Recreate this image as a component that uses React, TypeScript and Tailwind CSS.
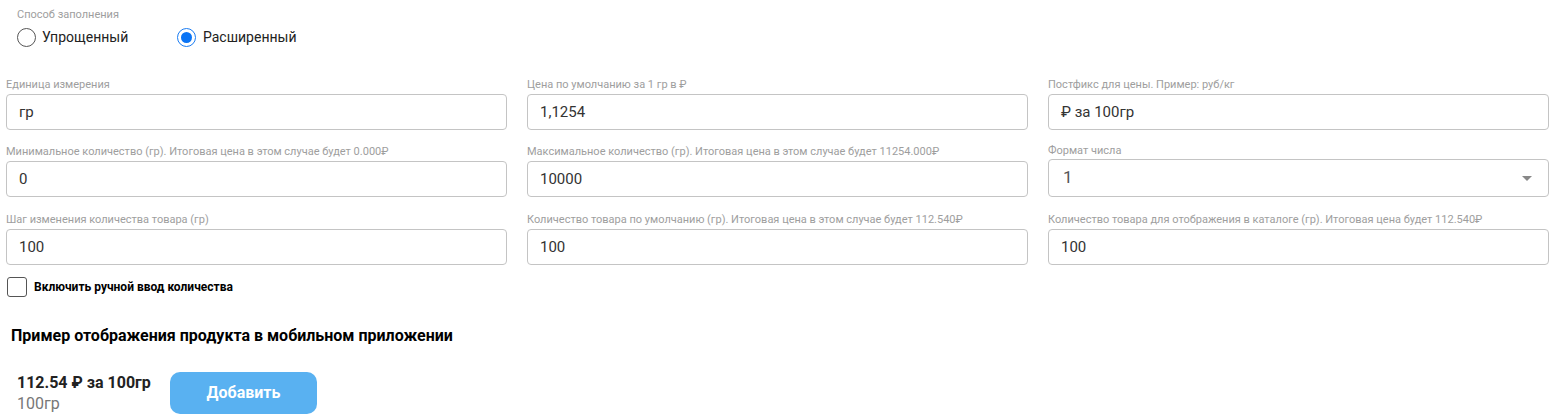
import React from "react";

const font = { fontFamily: "Roboto, 'Noto Sans', sans-serif" };

function Field({ label, value }: { label: string; value: string }) {
  return (
    <div className="flex flex-col">
      <div className="text-[11px] leading-[13px] text-[#9e9e9e] h-[13px] mb-[3px] whitespace-nowrap">{label}</div>
      <div className="h-[36px] border border-[#c4c4c4] rounded-[4px] flex items-center pl-[12px] text-[15px] text-[#333]">
        {value}
      </div>
    </div>
  );
}

export default function App() {
  return (
    <div style={font} className="w-[1563px] h-[419px] bg-white text-black overflow-hidden">
      <div className="pl-[17px] pt-[8px]">
        <div className="text-[11px] leading-[13px] text-[#9e9e9e]">Способ заполнения</div>
        <div className="flex items-center mt-[6px] h-[20px]">
          <div className="flex items-center w-[160px]">
            <div className="w-[19px] h-[19px] rounded-full border-[1.5px] border-[#555]" />
            <span className="ml-[6px] text-[14px] text-[#222]">Упрощенный</span>
          </div>
          <div className="flex items-center">
            <div className="w-[19px] h-[19px] rounded-full border-[1.5px] border-[#1a7cf2] flex items-center justify-center">
              <div className="w-[11px] h-[11px] rounded-full bg-[#0a74f5]" />
            </div>
            <span className="ml-[7px] text-[14px] text-[#222]">Расширенный</span>
          </div>
        </div>
      </div>

      <div className="pl-[6px] pr-[14px] mt-[31px] grid grid-cols-3 gap-x-[20px]">
        <div className="flex flex-col">
          <Field label="Единица измерения" value="гр" />
          <div className="mt-[15px]">
            <Field label="Минимальное количество (гр). Итоговая цена в этом случае будет 0.000₽" value="0" />
          </div>
          <div className="mt-[16px]">
            <Field label="Шаг изменения количества товара (гр)" value="100" />
          </div>
        </div>
        <div className="flex flex-col">
          <Field label="Цена по умолчанию за 1 гр в ₽" value="1,1254" />
          <div className="mt-[15px]">
            <Field label="Максимальное количество (гр). Итоговая цена в этом случае будет 11254.000₽" value="10000" />
          </div>
          <div className="mt-[16px]">
            <Field label="Количество товара по умолчанию (гр). Итоговая цена в этом случае будет 112.540₽" value="100" />
          </div>
        </div>
        <div className="flex flex-col">
          <Field label="Постфикс для цены. Пример: руб/кг" value="₽ за 100гр" />
          <div className="mt-[14px] flex flex-col">
            <div className="text-[11px] leading-[13px] text-[#9e9e9e] h-[13px] mb-[2px]">Формат числа</div>
            <div className="h-[38px] border border-[#c4c4c4] rounded-[4px] flex items-center justify-between pl-[14px] pr-[16px] text-[17px] text-[#555]">
              <span>1</span>
              <svg width="10" height="5" viewBox="0 0 10 5"><path d="M0 0 L10 0 L5 5 Z" fill="#888" /></svg>
            </div>
          </div>
          <div className="mt-[16px]">
            <Field label="Количество товара для отображения в каталоге (гр). Итоговая цена будет 112.540₽" value="100" />
          </div>
        </div>
      </div>

      <div className="pl-[7px] mt-[12px] flex items-center">
        <div className="w-[20px] h-[20px] rounded-[3px] border border-[#555]" />
        <span className="ml-[7px] text-[12px] font-bold text-black">Включить ручной ввод количества</span>
      </div>

      <div className="pl-[11px] mt-[29px] text-[16px] leading-[20px] font-bold text-black">
        Пример отображения продукта в мобильном приложении
      </div>

      <div className="pl-[17px] mt-[26px] flex items-center">
        <div className="flex flex-col w-[153px]">
          <span className="text-[16px] leading-[21px] font-bold text-[#222]">112.54 ₽ за 100гр</span>
          <span className="text-[16px] leading-[21px] text-[#777]">100гр</span>
        </div>
        <div className="w-[147px] h-[42px] rounded-[10px] bg-[#59b1f1] flex items-center justify-center text-white font-bold text-[16px]">
          Добавить
        </div>
      </div>
    </div>
  );
}
